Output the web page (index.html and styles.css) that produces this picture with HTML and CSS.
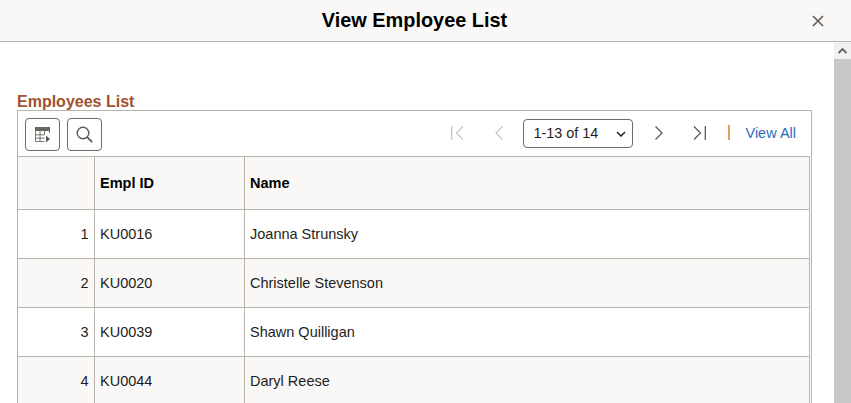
FILE: index.html
```html
<!DOCTYPE html>
<html lang="en">
<head>
<meta charset="utf-8">
<title>View Employee List</title>
<link rel="stylesheet" href="styles.css">
</head>
<body>
<header class="modal-head">
  <h1 class="modal-title">View Employee List</h1>
  <button class="close" aria-label="Close">
    <svg width="12" height="12" viewBox="0 0 12 12"><path d="M1 1l10 10M11 1L1 11" stroke="#5f5b57" stroke-width="1.6" fill="none"/></svg>
  </button>
</header>
<div class="modal-body">
  <main class="content">
    <h2 class="grid-title">Employees List</h2>
    <section class="grid">
      <div class="toolbar">
        <button class="tool" aria-label="Personalize">
          <svg width="16" height="16" viewBox="0 0 16 16"><path d="M0 0h15v4H0z" fill="#6a6662"/><path d="M.5 4v10.500h9M.5 7.800h9M.5 11.200h9M5 4v10.500M9.500 4v4M14.500 4v2" stroke="#7a7672" fill="none"/><path d="M11 8.500l4 3.500-4 3.500z" fill="#5f5b57"/></svg>
        </button>
        <button class="tool" aria-label="Find">
          <svg width="17" height="17" viewBox="0 0 17 17"><circle cx="7" cy="7" r="5.800" stroke="#5f5b57" stroke-width="1.400" fill="none"/><path d="M11.200 11.200l5 5" stroke="#5f5b57" stroke-width="1.800" fill="none"/></svg>
        </button>
        <nav class="pager">
          <svg class="pg pg-first" width="13" height="14" viewBox="0 0 13 14"><path d="M.7 0v14M12 .5L5.500 7l6.500 6.500" stroke="#c9c6c2" stroke-width="1.300" fill="none"/></svg>
          <svg class="pg pg-prev" width="8" height="14" viewBox="0 0 8 14"><path d="M7.500.5L1 7l6.500 6.500" stroke="#c9c6c2" stroke-width="1.300" fill="none"/></svg>
          <select class="page-select"><option>1-13 of 14</option></select>
          <svg class="pg pg-next" width="8" height="14" viewBox="0 0 8 14"><path d="M.5.500L7 7l-6.500 6.500" stroke="#5f5b57" stroke-width="1.300" fill="none"/></svg>
          <svg class="pg pg-last" width="13" height="14" viewBox="0 0 13 14"><path d="M12.300 0v14M1 .5L7.500 7 1 13.500" stroke="#5f5b57" stroke-width="1.300" fill="none"/></svg>
          <span class="divider"></span>
          <a class="view-all" href="#">View All</a>
        </nav>
      </div>
      <table class="list">
        <thead>
          <tr><th class="c-num"></th><th class="c-id">Empl ID</th><th>Name</th></tr>
        </thead>
        <tbody>
          <tr><td class="c-num">1</td><td>KU0016</td><td>Joanna Strunsky</td></tr>
          <tr class="alt"><td class="c-num">2</td><td>KU0020</td><td>Christelle Stevenson</td></tr>
          <tr><td class="c-num">3</td><td>KU0039</td><td>Shawn Quilligan</td></tr>
          <tr class="alt"><td class="c-num">4</td><td>KU0044</td><td>Daryl Reese</td></tr>
        </tbody>
      </table>
    </section>
  </main>
  <div class="scrollbar">
    <div class="sb-btn"><svg width="9" height="6" viewBox="0 0 9 6"><path d="M.5 5L4.500 1l4 4" stroke="#5f5b57" stroke-width="1.800" fill="none"/></svg></div>
    <div class="sb-thumb"></div>
  </div>
</div>
</body>
</html>
```
FILE: styles.css
```css
* { box-sizing: border-box; }
html, body { margin: 0; height: 100%; overflow: hidden; }
body {
  background: #fff;
  color: #1f1d1b;
  font-family: "Liberation Sans", Arial, sans-serif;
  font-size: 14.5px;
  display: flex;
  flex-direction: column;
}
.modal-head {
  height: 42px;
  flex: none;
  background: #f9f8f6;
  border-bottom: 1px solid #b8b3ab;
  display: flex;
  align-items: center;
  justify-content: center;
  position: relative;
  padding-right: 22px;
}
.modal-title {
  margin: 0;
  font-size: 19.9px;
  font-weight: 700;
  color: #000;
}
.close {
  position: absolute;
  right: 27px;
  top: 15px;
  width: 12px;
  height: 12px;
  padding: 0;
  border: 0;
  background: none;
  display: flex;
}
.modal-body { flex: 1; display: flex; min-height: 0; }
.content { flex: 1; padding: 51px 23px 0 17px; min-width: 0; overflow: hidden; }
.grid-title {
  margin: 0;
  height: 17px;
  line-height: 17px;
  font-size: 16px;
  font-weight: 700;
  color: #a0522d;
}
.grid { border: 1px solid #b8b3ab; border-bottom: 0; width: 795px; }
.toolbar {
  height: 45px;
  display: flex;
  align-items: center;
  padding: 0 15px 0 7px;
  gap: 7px;
}
.tool {
  width: 35px;
  height: 33px;
  margin-top: 2px;
  padding: 0;
  border: 1px solid #6f6b66;
  border-radius: 4px;
  background: #fff;
  display: flex;
  align-items: center;
  justify-content: center;
}
.pager { margin-left: auto; margin-bottom: 2px; display: flex; align-items: center; }
.pg { flex: none; }
.pg-first { margin-right: 31px; }
.pg-prev { margin-right: 20px; }
.page-select {
  appearance: none;
  width: 110px;
  height: 29px;
  margin-top: 2px;
  margin-right: 22px;
  padding: 0 0 1px 9px;
  border: 1px solid #6f6b66;
  border-radius: 4px;
  background: #fff url("data:image/svg+xml,%3Csvg xmlns='http://www.w3.org/2000/svg' width='10' height='6' viewBox='0 0 10 6'%3E%3Cpath d='M1 1l4 4 4-4' stroke='%23222' stroke-width='1.500' fill='none'/%3E%3C/svg%3E") no-repeat right 6px center;
  color: #1f1d1b;
  font: 14.4px "Liberation Sans", Arial, sans-serif;
}
.pg-next { margin-right: 30px; }
.pg-last { margin-right: 21px; }
.divider { width: 2px; height: 15px; background: #d9a25f; margin-right: 15px; margin-left: 1px; }
.view-all { color: #2a6ebb; text-decoration: none; }
.list {
  width: 792px;
  border-collapse: collapse;
  table-layout: fixed;
}
.list th, .list td {
  border: 1px solid #b8b3ab;
  padding: 0 5px 0 5.500px;
  text-align: left;
}
.list tr > :first-child { border-left: 0; }
.list th { height: 53px; background: #f9f8f6; font-weight: 700; color: #000; }
.list td { height: 49px; }
.list .alt td { background: #f9f8f6; }
.list .c-num { width: 76px; text-align: right; }
.list .c-id { width: 150px; }
.scrollbar { width: 17px; flex: none; background: #f1f1f1; display: flex; flex-direction: column; }
.sb-btn { height: 17px; flex: none; display: flex; align-items: center; justify-content: center; }
.sb-thumb { flex: 1; background: #c8c8c8; }
```
